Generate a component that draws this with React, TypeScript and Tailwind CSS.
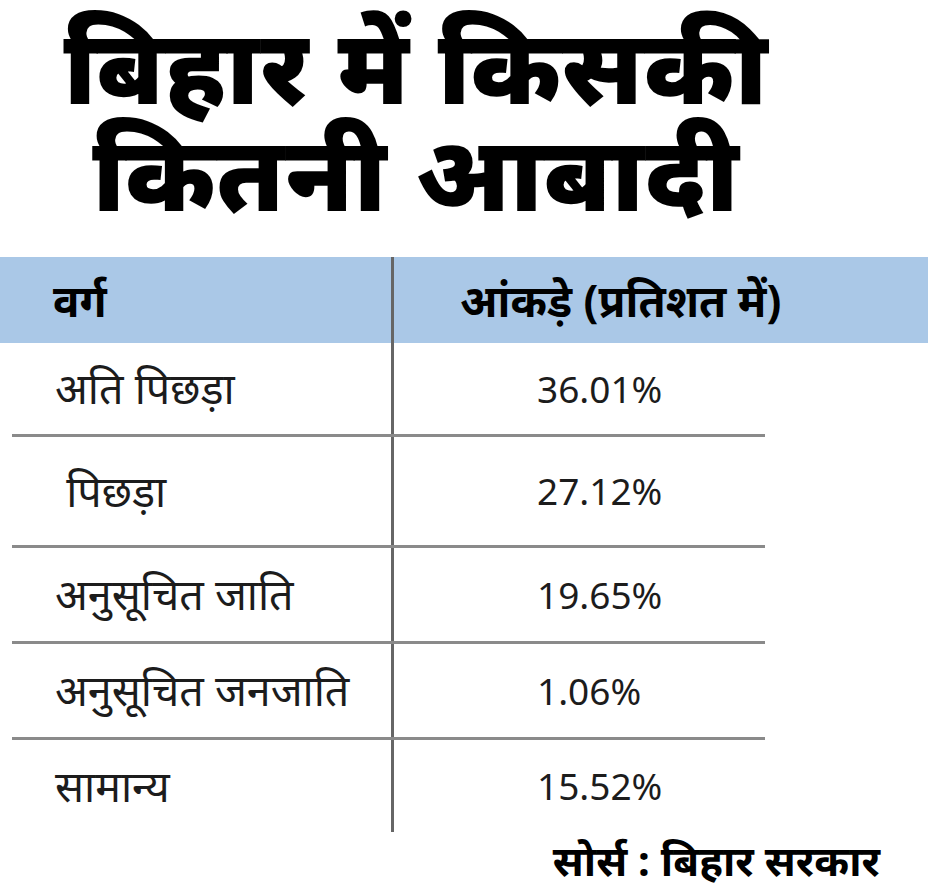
import React from "react";

const rows = [
  { label: "अति पिछड़ा", value: "36.01%", h: "h-[94px]" },
  { label: "\u00a0पिछड़ा", value: "27.12%", h: "h-[111px]" },
  { label: "अनुसूचित जाति", value: "19.65%", h: "h-[96px]" },
  { label: "अनुसूचित जनजाति", value: "1.06%", h: "h-[96px]" },
  { label: "सामान्य", value: "15.52%", h: "h-[92px]" },
];

export default function App() {
  return (
    <div className="w-[928px] h-[891px] bg-white text-black font-['Noto_Sans','Noto_Sans_Devanagari',sans-serif] overflow-hidden">
      {/* Title */}
      <div className="pt-[10px] pr-[96px] h-[257px] text-center">
        <h1 className="text-[104px] font-black leading-[107px] tracking-[1px]">
          <span className="block">बिहार में किसकी</span>
          <span className="block">कितनी आबादी</span>
        </h1>
      </div>

      {/* Table header */}
      <div className="flex h-[86px] bg-[#aac8e7]">
        <div className="w-[391px] pl-[53px] flex items-center text-[44px] font-bold">
          वर्ग
        </div>
        <div className="w-[3px] bg-[#666]" />
        <div className="flex-1 pl-[66px] flex items-center text-[44px] font-bold">
          आंकड़े (प्रतिशत में)
        </div>
      </div>

      {/* Rows */}
      <div>
        {rows.map((r, i) => (
          <div key={i} className={`${r.h} flex flex-col`}>
            <div className="flex flex-1">
              <div className="w-[391px] pl-[55px] flex items-center text-[43px] text-[#1c1c1c]">
                {r.label}
              </div>
              <div className="w-[3px] bg-[#666]" />
              <div className="flex-1 pl-[143px] flex items-center text-[37px] text-[#1c1c1c]">
                {r.value}
              </div>
            </div>
            {i < rows.length - 1 && (
              <div className="ml-[12px] w-[753px] h-[3px] bg-[#8a8a8a]" />
            )}
          </div>
        ))}
      </div>

      {/* Source */}
      <div className="pr-[48px] text-right text-[42px] font-bold leading-[56px]">
        सोर्स : बिहार सरकार
      </div>
    </div>
  );
}
